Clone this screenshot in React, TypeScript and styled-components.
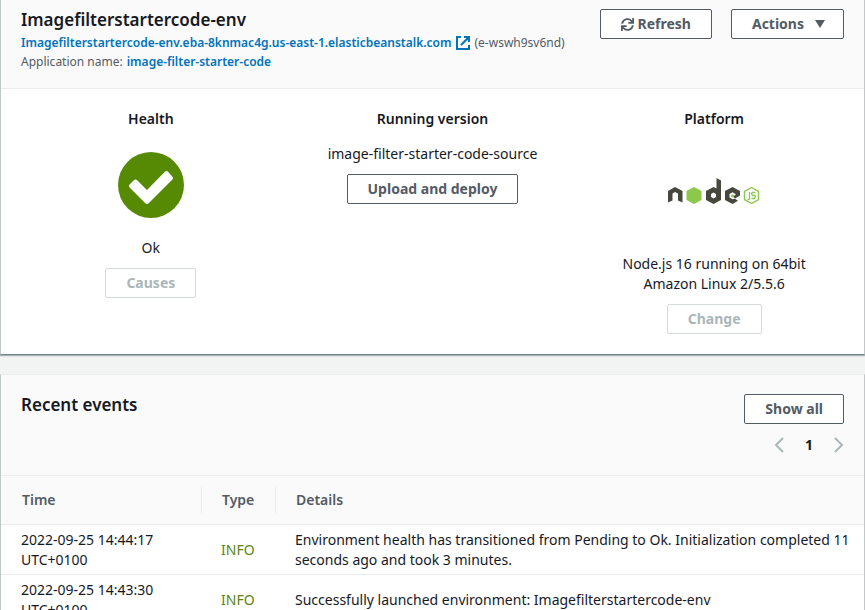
import React from "react";
import styled, { createGlobalStyle, css } from "styled-components";

const GlobalStyle = createGlobalStyle`
  *, *::before, *::after { box-sizing: border-box; }
  body {
    margin: 0;
    background: #f2f3f3;
    color: #16191f;
    font-family: "Noto Sans", "Open Sans", sans-serif;
    font-size: 14px;
    line-height: 20px;
  }
`;

const Page = styled.main`
  display: flex;
  flex-direction: column;
  gap: 19px;
  height: 100vh;
  overflow: hidden;
`;

const Card = styled.section`
  flex: none;
  background: #fff;
  border: solid #c1c8c8;
  border-width: 0 1px;
  box-shadow: 0 1px 1px rgba(0, 28, 36, 0.3);
`;

const SummaryCard = styled(Card)`
  border-bottom: 1px solid #79878a;
`;

const EventsCard = styled(Card)`
  border-top: 1px solid #eaeded;
`;

const CardHeader = styled.header`
  display: flex;
  justify-content: space-between;
  align-items: flex-start;
  padding: 9px 20px 17px;
  background: #fafafa;
  border-bottom: 1px solid #eaeded;
`;

const EventsHeader = styled(CardHeader)`
  padding: 19px 20px;
`;

const Title = styled.h2`
  margin: 0 0 2px;
  font-size: 17px;
  line-height: 22px;
  font-weight: 600;
`;

const Meta = styled.div`
  display: flex;
  align-items: center;
  gap: 4px;
  color: #545b64;
  font-size: 12px;
  line-height: 19px;
  white-space: nowrap;
`;

const Link = styled.a`
  display: inline-flex;
  align-items: center;
  gap: 5px;
  color: #0073bb;
  font-weight: 600;
  text-decoration: none;
`;

const Actions = styled.div`
  display: flex;
  gap: 19px;
`;

const Button = styled.button`
  display: inline-flex;
  align-items: center;
  justify-content: center;
  gap: 4px;
  height: 30px;
  padding: 0 20px;
  border: 1px solid #545b64;
  border-radius: 2px;
  background: #fff;
  color: #545b64;
  font: 700 14px/20px "Noto Sans", "Open Sans", sans-serif;
  white-space: nowrap;
  cursor: pointer;

  &:disabled {
    border-color: #d5dbdb;
    color: #aab7b8;
    cursor: default;
  }
`;

const MenuButton = styled(Button)`
  gap: 11px;
  padding-right: 18px;
`;

const Columns = styled.div`
  display: grid;
  grid-template-columns: repeat(3, 1fr);
  padding: 20px 9px;
`;

const Column = styled.div`
  display: flex;
  flex-direction: column;
  align-items: center;
  text-align: center;
`;

const ColumnTitle = styled.h3`
  margin: 0 0 15px;
  font-size: 14px;
  line-height: 20px;
  font-weight: 600;
`;

const Text = styled.p`
  max-width: 200px;
  margin: 0 0 10px;
`;

const VersionText = styled(Text)`
  max-width: none;
`;

const HealthIcon = styled.svg`
  width: 66px;
  height: 66px;
  margin: 8px 0 20px;
`;

const PlatformLogo = styled.svg`
  width: 92px;
  height: 26px;
  margin: 34px 0 50px;
`;

const Side = styled.div`
  display: flex;
  flex-direction: column;
  align-items: flex-end;
  gap: 10px;
`;

const Pager = styled.nav`
  display: flex;
  align-items: center;
  gap: 21px;
  height: 22px;
`;

const PagerButton = styled.button`
  display: flex;
  padding: 0;
  border: 0;
  background: none;
  color: #aab7b8;
`;

const PageNumber = styled.span`
  font-weight: 700;
`;

const Table = styled.table`
  width: 100%;
  border-collapse: collapse;
  table-layout: fixed;
`;

const HeadCell = styled.th<{ $width?: number }>`
  ${(p) => p.$width && css`width: ${p.$width}px;`}
  height: 48px;
  padding: 11px 0 10px;
  background: #fafafa;
  border-bottom: 1px solid #eaeded;
  color: #545b64;
  font-weight: 600;
  text-align: left;
`;

const HeadLabel = styled.span<{ $first?: boolean; $last?: boolean }>`
  display: block;
  padding: 3px 0 3px ${(p) => (p.$first ? 21 : 20)}px;
  border-right: ${(p) => (p.$last ? "0" : "1px solid #eaeded")};
`;

const Cell = styled.td<{ $info?: boolean }>`
  height: 50px;
  padding: 5px 8px 4px 19px;
  border-bottom: 1px solid #eaeded;
  color: ${(p) => (p.$info ? "#5c8313" : "inherit")};

  &:first-child {
    padding-left: 20px;
    padding-right: 20px;
  }
`;

const events = [
  {
    time: "2022-09-25 14:44:17 UTC+0100",
    type: "INFO",
    details:
      "Environment health has transitioned from Pending to Ok. Initialization completed 11 seconds ago and took 3 minutes.",
  },
  {
    time: "2022-09-25 14:43:30 UTC+0100",
    type: "INFO",
    details: "Successfully launched environment: Imagefilterstartercode-env",
  },
];

const ExternalIcon = () => (
  <svg width="14" height="14" viewBox="0 0 14 14" fill="none" stroke="currentColor" strokeWidth="2" aria-hidden="true">
    <path d="M5 1H1v12h12V9M8 1h5v5M13 1L5 9" />
  </svg>
);

const RefreshIcon = () => (
  <svg width="13" height="13" viewBox="0 0 512 512" fill="currentColor" aria-hidden="true">
    <path d="M440.65 12.57l4 82.77A247.16 247.16 0 0 0 255.83 8C134.73 8 33.91 94.92 12.29 209.82A12 12 0 0 0 24.09 224h49.05a12 12 0 0 0 11.67-9.26 175.91 175.91 0 0 1 317-56.94l-101.46-4.86a12 12 0 0 0-12.57 12v47.41a12 12 0 0 0 12 12H500a12 12 0 0 0 12-12V12a12 12 0 0 0-12-12h-47.37a12 12 0 0 0-11.98 12.57zM255.83 432a175.61 175.61 0 0 1-146-77.8l101.8 4.87a12 12 0 0 0 12.57-12v-47.4a12 12 0 0 0-12-12H12a12 12 0 0 0-12 12V500a12 12 0 0 0 12 12h47.35a12 12 0 0 0 12-12.6l-4.15-82.57A247.17 247.17 0 0 0 255.83 504c121.11 0 221.93-86.92 243.55-201.82a12 12 0 0 0-11.8-14.18h-49.05a12 12 0 0 0-11.67 9.26A175.86 175.86 0 0 1 255.83 432z" />
  </svg>
);

const CaretIcon = () => (
  <svg width="10" height="8" viewBox="0 0 10 8" fill="currentColor" aria-hidden="true">
    <path d="M0 0h10L5 8z" />
  </svg>
);

const Chevron = ({ right }: { right?: boolean }) => (
  <svg width="10" height="16" viewBox="0 0 10 16" fill="none" stroke="currentColor" strokeWidth="2" aria-hidden="true">
    <path d={right ? "M1 1l7 7-7 7" : "M9 1L2 8l7 7"} />
  </svg>
);

const NodeLogo = () => (
  <PlatformLogo viewBox="0 0 92 26" role="img" aria-label="Node.js">
    <g fill="#46483e">
      <path d="M0 13l7-4 7.500 4v11.500l-4.500-2v-7l-3-1.500-2.500 1.500v7l-4.500 2z" />
      <path fillRule="evenodd" d="M48.500 0l4.500 2.500v19.500l-7.500 4-7.500-4v-9l7.500-4 3 1.500zM45.500 14.500l-2.500 1.500v3l2.500 1.500 2.500-1.500v-3z" />
      <path d="M64.500 9L72 13V17.500L67 20.500L65 18.500L67.500 17V16L64.500 14.300L61.500 16V19.500L64.500 21.300L67 20.800L70 22.800L64.500 26L57 22V13z" />
    </g>
    <path fill="#8cc84b" d="M26 9l7.500 4v9l-7.500 4-7.500-4v-9z" />
    <circle fill="#8cc84b" cx="64.500" cy="17.700" r="1.500" />
    <g fill="none" stroke="#8cc84b">
      <path strokeWidth="1.4" d="M83.500 9.500l7 4v8l-7 4-7-4v-8z" />
      <path strokeWidth="1.3" d="M81.500 14v7l-2 1M87.500 14.500h-3l-1 1 1 2h2l1 1-1 2h-3" />
    </g>
  </PlatformLogo>
);

export default function App() {
  return (
    <>
      <GlobalStyle />
      <Page>
        <SummaryCard>
          <CardHeader>
            <div>
              <Title>Imagefilterstartercode-env</Title>
              <Meta>
                <Link href="#environment">
                  Imagefilterstartercode-env.eba-8knmac4g.us-east-1.elasticbeanstalk.com
                  <ExternalIcon />
                </Link>
                <span>(e-wswh9sv6nd)</span>
              </Meta>
              <Meta>
                <span>Application name:</span>
                <Link href="#application">image-filter-starter-code</Link>
              </Meta>
            </div>
            <Actions>
              <Button type="button"><RefreshIcon />Refresh</Button>
              <MenuButton type="button" aria-haspopup="menu">Actions<CaretIcon /></MenuButton>
            </Actions>
          </CardHeader>
          <Columns>
            <Column>
              <ColumnTitle>Health</ColumnTitle>
              <HealthIcon viewBox="0 0 66 66" aria-hidden="true">
                <circle cx="33" cy="33" r="33" fill="#568a03" />
                <path
                  d="M13 34l4.500-4.500L29 41l19.500-20 4.500 5L29 50z"
                  fill="#fff" stroke="#fff" strokeWidth="4" strokeLinejoin="round"
                />
              </HealthIcon>
              <Text>Ok</Text>
              <Button type="button" disabled>Causes</Button>
            </Column>
            <Column>
              <ColumnTitle>Running version</ColumnTitle>
              <VersionText>image-filter-starter-code-source</VersionText>
              <Button type="button">Upload and deploy</Button>
            </Column>
            <Column>
              <ColumnTitle>Platform</ColumnTitle>
              <NodeLogo />
              <Text>Node.js 16 running on 64bit Amazon Linux 2/5.5.6</Text>
              <Button type="button" disabled>Change</Button>
            </Column>
          </Columns>
        </SummaryCard>
        <EventsCard>
          <EventsHeader>
            <Title>Recent events</Title>
            <Side>
              <Button type="button">Show all</Button>
              <Pager aria-label="Event pages">
                <PagerButton type="button" aria-label="Previous page"><Chevron /></PagerButton>
                <PageNumber>1</PageNumber>
                <PagerButton type="button" aria-label="Next page"><Chevron right /></PagerButton>
              </Pager>
            </Side>
          </EventsHeader>
          <Table>
            <thead>
              <tr>
                <HeadCell scope="col" $width={201}><HeadLabel $first>Time</HeadLabel></HeadCell>
                <HeadCell scope="col" $width={74}><HeadLabel>Type</HeadLabel></HeadCell>
                <HeadCell scope="col"><HeadLabel $last>Details</HeadLabel></HeadCell>
              </tr>
            </thead>
            <tbody>
              {events.map((e) => (
                <tr key={e.time}>
                  <Cell>{e.time}</Cell>
                  <Cell $info>{e.type}</Cell>
                  <Cell>{e.details}</Cell>
                </tr>
              ))}
            </tbody>
          </Table>
        </EventsCard>
      </Page>
    </>
  );
}
